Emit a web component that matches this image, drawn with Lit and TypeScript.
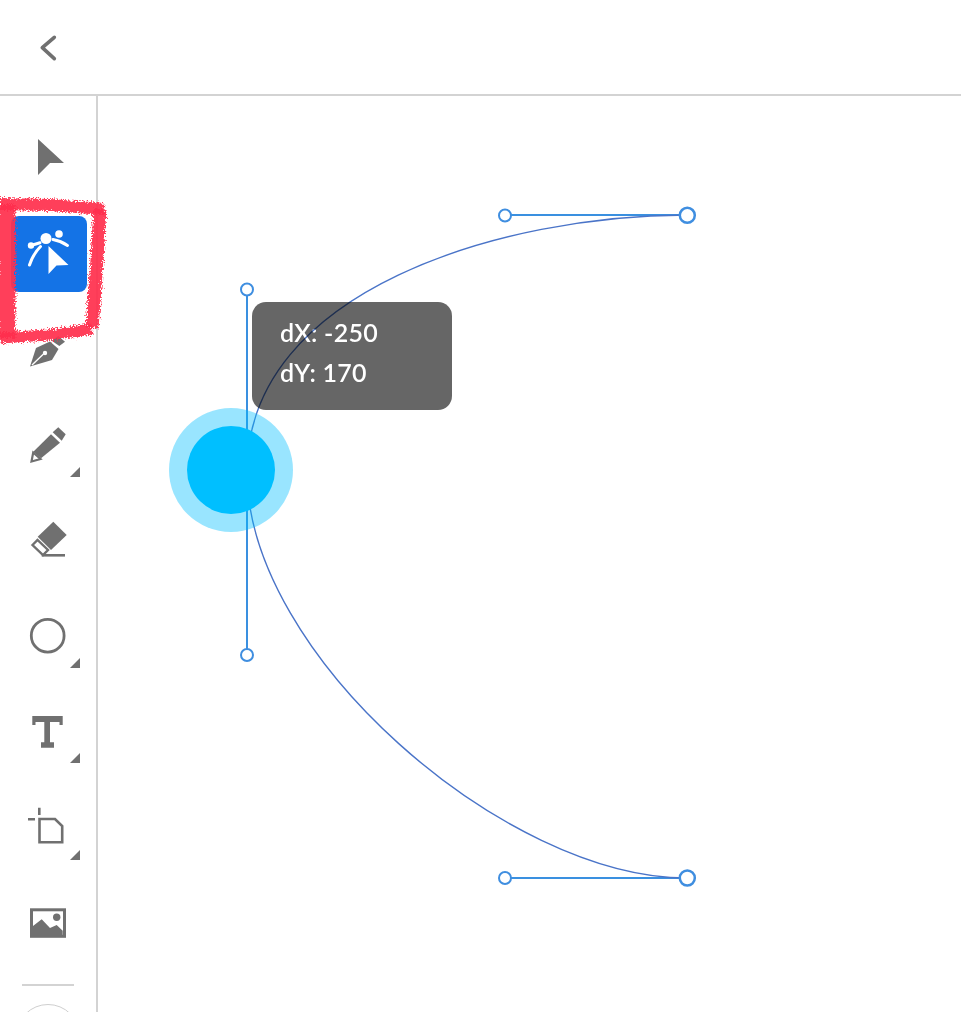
import { LitElement, html, css, svg } from "lit";
import { customElement } from "lit/decorators.js";

const G = "#707070";
const corner = (y: number) => svg`<polygon points="70,${y} 80,${y - 10} 80,${y}" fill="${G}"/>`;

const tools = [
  svg`<polygon points="38,139 64,163 50,163 38,175" fill="${G}"/>`,
  svg`<rect x="11" y="216" width="76" height="76" rx="8" fill="#1473e6"/>
      <g fill="#fff" stroke="none">
        <circle cx="46" cy="238.5" r="5.5"/><circle cx="31" cy="245.5" r="3.2"/><circle cx="59" cy="234" r="3.8"/>
        <polygon points="48.5,246 68.5,265 56.5,265.5 48.5,274"/>
      </g>
      <g fill="none" stroke="#fff" stroke-width="3" stroke-linecap="round">
        <path d="M31 245.5L40 242.8"/><path d="M29.5 265Q33 254 40.5 246.5"/><path d="M53 239.5Q61 241 67.5 245.5"/>
      </g>`,
  svg`<polygon points="51.7,340.7 58.3,336 65,341.7 59.3,346" fill="${G}"/>
      <polygon points="50,341.5 58.5,349 52,360 30,366.5 36,348" fill="${G}"/>
      <path d="M32 365L43.5 354" stroke="#fff" stroke-width="1.4" fill="none"/>
      <circle cx="45" cy="353" r="2.2" fill="#fff"/>`,
  svg`<polygon points="58.3,427.3 65.7,434.3 61.7,440.7 52.7,432.3" fill="${G}"/>
      <polygon points="51,434.3 60,442.7 41,458.3 33.3,451.7" fill="${G}"/>
      <polygon points="33.2,452.5 40.5,459 31.5,461.5" fill="#fff" stroke="${G}" stroke-width="2.2"/>
      ${corner(477)}`,
  svg`<polygon points="53.3,521.7 66.7,535 51,550 37.7,536.7" fill="${G}"/>
      <polygon points="32.5,545 37.5,540 48,550 43,555" fill="#fff" stroke="${G}" stroke-width="2.4"/>
      <path d="M41.7 555.3H65" stroke="${G}" stroke-width="2.6"/>`,
  svg`<circle cx="47.7" cy="635.7" r="16.4" fill="none" stroke="${G}" stroke-width="2.8"/>${corner(668)}`,
  svg`<path d="M32.3 716H62.7V725H59.5V722H50V742.3H54V747.7H41V742.3H44.3V722H35.5V725H32.3Z" fill="${G}"/>${corner(763)}`,
  svg`<path d="M39.5 819H55L62.2 826V842.2H39.5Z" fill="none" stroke="${G}" stroke-width="2.6"/>
      <path d="M39.3 807.7V815M28 819.2H35" stroke="${G}" stroke-width="2.6" fill="none"/>${corner(860)}`,
  svg`<rect x="31.5" y="909.8" width="33" height="26.5" fill="#fff" stroke="${G}" stroke-width="3"/>
      <circle cx="56.7" cy="917.3" r="3.7" fill="${G}"/>
      <path d="M33 926L41.7 919.3L50 928L56.7 925L62.7 930.7V936H33Z" fill="${G}"/>`,
];

@customElement("app-root")
export class AppRoot extends LitElement {
  static styles = css`
    :host { display: block; position: relative; width: 961px; height: 1012px; overflow: hidden; background: #fff; font-family: "Lato", "Open Sans", sans-serif; }
    .top { height: 94px; border-bottom: 2px solid #d3d3d3; box-sizing: content-box; display: flex; align-items: center; }
    .top svg { display: block; width: 96px; height: 94px; }
    .main { display: flex; height: 916px; }
    .side { width: 96px; flex: none; border-right: 2px solid #d3d3d3; padding-top: 13px; display: flex; flex-direction: column; overflow: hidden; }
    .tool { width: 96px; height: 96px; flex: none; }
    .tool svg { display: block; width: 96px; height: 96px; }
    .rule { flex: none; height: 2px; margin: 11px 22px 0; background: #d3d3d3; }
    .ring { flex: none; width: 64px; height: 64px; box-sizing: border-box; margin: 18px 0 0 16px; border: 1.5px solid #cfcfcf; border-radius: 50%; }
    .canvas { flex: 1; position: relative; overflow: hidden; }
    .canvas svg { display: block; width: 863px; height: 916px; }
    .tip { position: absolute; left: 154px; top: 206px; width: 200px; height: 108px; box-sizing: border-box; padding: 10px 28px; background: #666; border-radius: 14px; color: #fff; font-size: 25px; letter-spacing: 0.25px; line-height: 40px; font-weight: 600; mix-blend-mode: multiply; }
    .scribble { position: absolute; left: 0; top: 190px; width: 120px; height: 165px; pointer-events: none; }
  `;

  render() {
    return html`
      <div class="top">
        <svg viewBox="0 0 96 94"><path d="M54.3 37.3L42.3 47.7L54.3 58.7" fill="none" stroke="${G}" stroke-width="3.6" stroke-linecap="round" stroke-linejoin="round"/></svg>
      </div>
      <div class="main">
        <div class="side">
          ${tools.map((t, i) => html`<div class="tool"><svg viewBox="0 ${109 + 96 * i} 96 96">${t}</svg></div>`)}
          <div class="rule"></div>
          <div class="ring"></div>
        </div>
        <div class="canvas">
          <svg viewBox="98 96 863 916">
            <g stroke="#3a90e0" stroke-width="2" fill="none">
              <path d="M505 215H687M505 878H687M247 289V655"/>
            </g>
            <g stroke="#4a74c8" stroke-width="1.4" fill="none">
              <path d="M687 215C505 215 247 289 247 472C247 655 505 878 687 878"/>
            </g>
            <circle cx="231" cy="470" r="62" fill="#00bfff" fill-opacity="0.4"/>
            <circle cx="231" cy="470" r="44" fill="#00bfff"/>
            <g fill="#fff" stroke="#3f8ee0">
              <circle cx="505" cy="215.5" r="6" stroke-width="2"/>
              <circle cx="505" cy="878" r="6" stroke-width="2"/>
              <circle cx="247" cy="289.5" r="6" stroke-width="2"/>
              <circle cx="247" cy="655" r="6" stroke-width="2"/>
              <circle cx="687.3" cy="215.3" r="7.5" stroke-width="2.5"/>
              <circle cx="687.3" cy="878" r="7.5" stroke-width="2.5"/>
            </g>
          </svg>
          <div class="tip">dX: -250<br />dY: 170</div>
        </div>
      </div>
      <svg class="scribble" viewBox="0 190 120 165">
        <defs>
          <filter id="rough" x="-10%" y="-10%" width="120%" height="120%">
            <feTurbulence type="fractalNoise" baseFrequency="0.7" numOctaves="3" seed="4" result="n"/>
            <feDisplacementMap in="SourceGraphic" in2="n" scale="8" result="d"/>
            <feGaussianBlur in="d" stdDeviation="0.4"/>
          </filter>
        </defs>
        <g filter="url(#rough)" fill="none" stroke="#ff2f4e" stroke-opacity="0.93" stroke-linejoin="round">
          <path d="M0 204L50 205L104 209" stroke-width="12"/>
          <path d="M100 209L97 260L92 328" stroke-width="13"/>
          <path d="M92 329L48 335L0 338" stroke-width="11"/>
          <path d="M7 204L7 338" stroke-width="17"/>
        </g>
      </svg>
    `;
  }
}
